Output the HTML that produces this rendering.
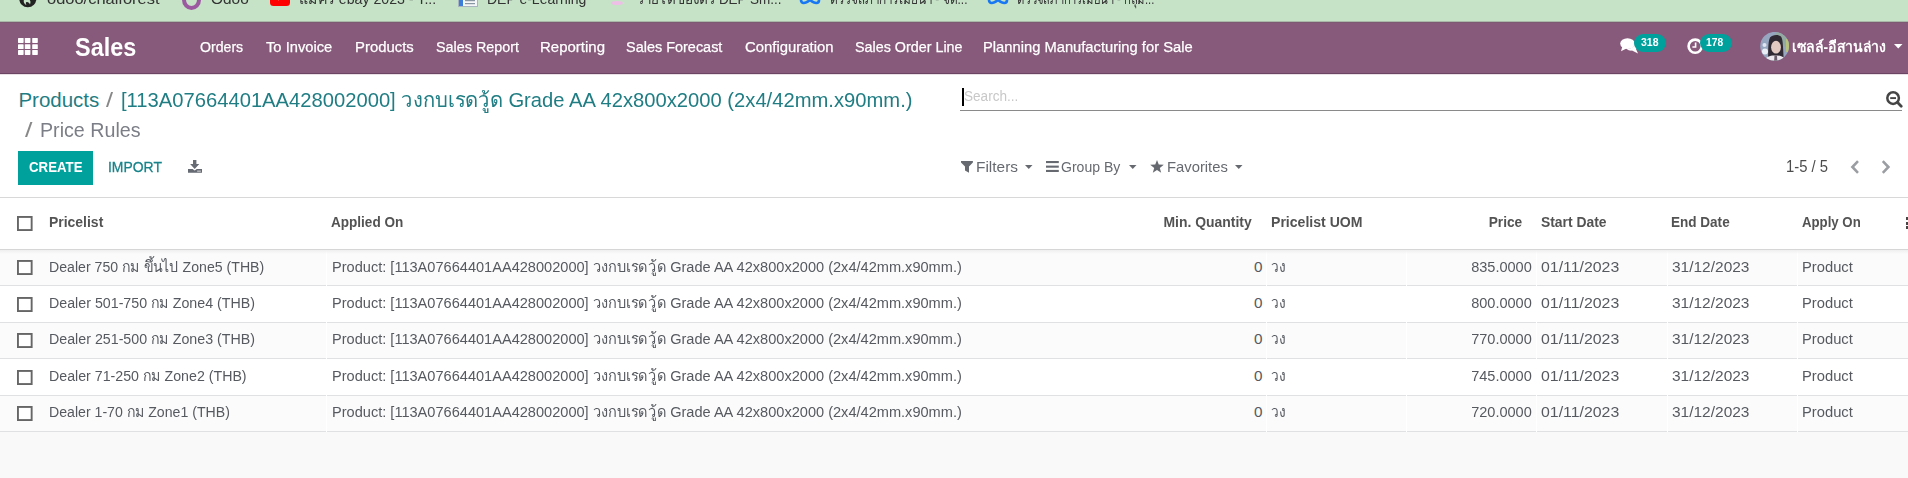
<!DOCTYPE html>
<html><head><meta charset="utf-8"><title>Price Rules</title>
<style>
html,body{margin:0;padding:0;width:1908px;height:478px;overflow:hidden;background:#fff;font-family:"Liberation Sans", sans-serif;}
.t{position:absolute;white-space:pre;line-height:20px;}
</style></head><body>
<div style="position:absolute;left:0px;top:0px;width:1908px;height:21px;background:#c6e2c7;"></div>
<div style="position:absolute;left:0px;top:21px;width:1908px;height:1px;background:#a9b8a8;"></div>
<svg style="position:absolute;left:19px;top:-10px" width="18" height="18" viewBox="0 0 18 18"><circle cx="8.8" cy="8.6" r="8.6" fill="#222"/><path d="M5.5 0.5C6 4 6.5 7.5 9 9C11.5 10 12 11.5 11 14.5C10.5 12.5 8.5 11.6 7.2 12.2C6.4 13 7 14.3 7.6 15C5.5 14.6 4.4 12.6 4.8 10.5C5.2 8.4 4.6 4.5 5.5 0.5Z" fill="#c6e2c7"/></svg>
<div class="t" id="t1" style="left:47.00px;top:-11.20px;font-size:15px;font-weight:normal;color:#333;transform:scaleX(1.0971);transform-origin:left center;">odoo/chaiforest</div>
<div style="position:absolute;left:182px;top:-10px;width:11px;height:12px;border:4px solid #9b59a0;border-radius:50%"></div>
<div class="t" id="t2" style="left:211.00px;top:-11.20px;font-size:15px;font-weight:normal;color:#333;transform:scaleX(1.0286);transform-origin:left center;">Odoo</div>
<svg style="position:absolute;left:270px;top:-8px" width="20" height="14"><rect width="20" height="14" rx="3.5" fill="#f00"/><path d="M8 2V8.5L13.5 5.2Z" fill="#fff"/></svg>
<div class="t" id="t3" style="left:299.40px;top:-11.20px;font-size:15px;font-weight:normal;color:#333;transform:scaleX(0.9444);transform-origin:left center;">แม็คร ebay 2023 - T...</div>
<svg style="position:absolute;left:458px;top:-8px" width="21" height="16"><rect x="0.5" y="0.5" width="19" height="14" fill="#f4f6f8" stroke="#a8b4c0"/><rect x="1" y="1" width="4" height="13" fill="#3b7dd8"/><rect x="7" y="8" width="10" height="1.2" fill="#8896a4"/><rect x="7" y="11" width="10" height="1.2" fill="#8896a4"/></svg>
<div class="t" id="t4" style="left:487.30px;top:-11.20px;font-size:15px;font-weight:normal;color:#333;transform:scaleX(0.9333);transform-origin:left center;">DEP e-Learning</div>
<svg style="position:absolute;left:609px;top:-8px" width="16" height="15"><path d="M6 0H10L9 8H7Z" fill="#d42fc8"/><ellipse cx="8" cy="11" rx="6" ry="2" fill="#eebfe6"/></svg>
<div class="t" id="t5" style="left:637.20px;top:-11.20px;font-size:15px;font-weight:normal;color:#333;transform:scaleX(0.8981);transform-origin:left center;">รายได้ของตร DEP Sm...</div>
<svg style="position:absolute;left:799px;top:-6px" width="22" height="12" viewBox="0 0 22 12"><path d="M2 6c0-4 4-4 9 0s9 4 9 0-4-4-9 0-9 4-9 0" fill="none" stroke="#1877f2" stroke-width="2.6"/></svg>
<div class="t" id="t6" style="left:829.90px;top:-11.20px;font-size:15px;font-weight:normal;color:#333;transform:scaleX(0.7907);transform-origin:left center;">ตรวจสภาการเมียนำ - จัด...</div>
<svg style="position:absolute;left:987px;top:-6px" width="22" height="12" viewBox="0 0 22 12"><path d="M2 6c0-4 4-4 9 0s9 4 9 0-4-4-9 0-9 4-9 0" fill="none" stroke="#1877f2" stroke-width="2.6"/></svg>
<div class="t" id="t7" style="left:1017.30px;top:-11.20px;font-size:15px;font-weight:normal;color:#333;transform:scaleX(0.7514);transform-origin:left center;">ตรวจสภาการเมียนำ - กลุ่ม...</div>
<div style="position:absolute;left:0px;top:22px;width:1908px;height:51px;background:#875a7b;"></div>
<div style="position:absolute;left:0px;top:22px;width:1908px;height:1px;background:#7c5a72;"></div>
<div style="position:absolute;left:0px;top:73px;width:1908px;height:1px;background:#6a4462;"></div>
<div style="position:absolute;left:0px;top:74px;width:1908px;height:1px;background:#e9e0e6;"></div>
<svg style="position:absolute;left:18px;top:37.6px" width="21" height="17"><rect x="0.0" y="0.0" width="5.6" height="4.9" rx="0.6" fill="#fff"/><rect x="0.0" y="6.2" width="5.6" height="4.9" rx="0.6" fill="#fff"/><rect x="0.0" y="12.0" width="5.6" height="4.9" rx="0.6" fill="#fff"/><rect x="6.8" y="0.0" width="5.6" height="4.9" rx="0.6" fill="#fff"/><rect x="6.8" y="6.2" width="5.6" height="4.9" rx="0.6" fill="#fff"/><rect x="6.8" y="12.0" width="5.6" height="4.9" rx="0.6" fill="#fff"/><rect x="14.2" y="0.0" width="5.6" height="4.9" rx="0.6" fill="#fff"/><rect x="14.2" y="6.2" width="5.6" height="4.9" rx="0.6" fill="#fff"/><rect x="14.2" y="12.0" width="5.6" height="4.9" rx="0.6" fill="#fff"/></svg>
<div class="t" id="t8" style="left:74.70px;top:37.24px;font-size:25px;font-weight:bold;color:#fff;transform:scaleX(0.9375);transform-origin:left center;">Sales</div>
<div class="t" id="t9" style="left:199.70px;top:36.93px;font-size:15.2px;font-weight:normal;color:#fff;transform:scaleX(0.9304);transform-origin:left center;-webkit-text-stroke:0.25px #fff;">Orders</div>
<div class="t" id="t10" style="left:265.70px;top:36.93px;font-size:15.2px;font-weight:normal;color:#fff;transform:scaleX(0.9691);transform-origin:left center;-webkit-text-stroke:0.25px #fff;">To Invoice</div>
<div class="t" id="t11" style="left:354.80px;top:36.93px;font-size:15.2px;font-weight:normal;color:#fff;transform:scaleX(0.9797);transform-origin:left center;-webkit-text-stroke:0.25px #fff;">Products</div>
<div class="t" id="t12" style="left:435.70px;top:36.93px;font-size:15.2px;font-weight:normal;color:#fff;transform:scaleX(0.9448);transform-origin:left center;-webkit-text-stroke:0.25px #fff;">Sales Report</div>
<div class="t" id="t13" style="left:540.40px;top:36.93px;font-size:15.2px;font-weight:normal;color:#fff;transform:scaleX(0.9875);transform-origin:left center;-webkit-text-stroke:0.25px #fff;">Reporting</div>
<div class="t" id="t14" style="left:626.20px;top:36.93px;font-size:15.2px;font-weight:normal;color:#fff;transform:scaleX(0.9515);transform-origin:left center;-webkit-text-stroke:0.25px #fff;">Sales Forecast</div>
<div class="t" id="t15" style="left:744.60px;top:36.93px;font-size:15.2px;font-weight:normal;color:#fff;transform:scaleX(0.9809);transform-origin:left center;-webkit-text-stroke:0.25px #fff;">Configuration</div>
<div class="t" id="t16" style="left:854.70px;top:36.93px;font-size:15.2px;font-weight:normal;color:#fff;transform:scaleX(0.9438);transform-origin:left center;-webkit-text-stroke:0.25px #fff;">Sales Order Line</div>
<div class="t" id="t17" style="left:983.00px;top:36.93px;font-size:15.2px;font-weight:normal;color:#fff;transform:scaleX(0.9698);transform-origin:left center;-webkit-text-stroke:0.25px #fff;">Planning Manufacturing for Sale</div>
<svg style="position:absolute;left:1620px;top:38px" width="19" height="16" viewBox="0 0 19 16"><ellipse cx="7.5" cy="5.6" rx="7.3" ry="5.4" fill="#fff"/><path d="M2.2 9 L1 13.2 L6.5 10.5Z" fill="#fff"/><path d="M15.2 3.5 C18.5 5 18.8 9 16 11 L18 15.5 L12 12.6 C10 12.8 8 12.2 6.8 11.2 C11.5 11 15.5 8 15.2 3.5Z" fill="#fff"/></svg>
<div style="position:absolute;left:1634px;top:34.3px;width:32px;height:18px;border-radius:9px;background:#00a09d"></div>
<div class="t" id="t18" style="left:1640.80px;top:31.86px;font-size:10.8px;font-weight:bold;color:#fff;transform:scaleX(0.9722);transform-origin:left center;">318</div>
<svg style="position:absolute;left:1687px;top:37.5px" width="17" height="17" viewBox="0 0 17 17"><circle cx="8.2" cy="8.2" r="6.6" fill="none" stroke="#fff" stroke-width="2.6"/><path d="M8.6 4.4V9H5.4" fill="none" stroke="#fff" stroke-width="1.6"/></svg>
<div style="position:absolute;left:1700px;top:34.3px;width:31.5px;height:18px;border-radius:9px;background:#00a09d"></div>
<div class="t" id="t19" style="left:1706.40px;top:31.86px;font-size:10.8px;font-weight:bold;color:#fff;transform:scaleX(0.9500);transform-origin:left center;">178</div>
<svg style="position:absolute;left:1760px;top:32px;filter:blur(0.6px)" width="29" height="29" viewBox="0 0 29 29"><defs><clipPath id="av"><circle cx="14.6" cy="14.3" r="14.4"/></clipPath></defs><g clip-path="url(#av)"><rect x="-3" y="-3" width="35" height="35" fill="#97a6c0"/><ellipse cx="22" cy="7" rx="9" ry="8" fill="#93aaa2"/><rect x="26" y="7" width="5" height="13" fill="#b9c27c"/><circle cx="4.5" cy="13" r="2" fill="#dfe6f1"/><circle cx="5" cy="19.5" r="3" fill="#e9eef6"/><path d="M8 31 C8.5 22 7.5 11 10 5.5 C12 2.5 18.5 2 21 4.5 C23.5 7.5 23 20 24 31Z" fill="#2e2933"/><ellipse cx="16" cy="15.2" rx="4.9" ry="6.4" fill="#e2cac2"/><path d="M11 8.5 C13 5 18.5 4.5 21 8 C18.5 7 14 7.2 11 8.5Z" fill="#2e2933"/><path d="M3 31 C5 25 10 23 15.5 23.5 C21 23 25 25 27 31Z" fill="#ece6ee"/><path d="M14.5 23.5 L17 23.5 L17.4 31 L14 31Z" fill="#6a5c6a"/></g></svg>
<div class="t" id="t20" style="left:1792.30px;top:36.91px;font-size:14.7px;font-weight:bold;color:#fff;transform:scaleX(0.9557);transform-origin:left center;">เซลล์-อีสานล่าง</div>
<svg style="position:absolute;left:1894px;top:44px" width="9" height="5"><path d="M0 0H8.5L4.25 4.5Z" fill="#fff"/></svg>
<div class="t" id="t21" style="left:18.40px;top:89.70px;font-size:20.5px;font-weight:normal;color:#1f7d83;">Products</div>
<div class="t" id="t22" style="left:105.80px;top:89.70px;font-size:20.5px;font-weight:normal;color:#888;transform:scaleX(1.2333);transform-origin:left center;">/</div>
<div class="t" id="t23" style="left:121.00px;top:89.70px;font-size:20.5px;font-weight:normal;color:#1f7d83;transform:scaleX(0.9850);transform-origin:left center;">[113A07664401AA428002000] วงกบเรดวู้ด Grade AA 42x800x2000 (2x4/42mm.x90mm.)</div>
<div class="t" id="t24" style="left:24.60px;top:119.50px;font-size:20.5px;font-weight:normal;color:#888;transform:scaleX(1.3000);transform-origin:left center;">/</div>
<div class="t" id="t25" style="left:39.80px;top:119.50px;font-size:20.5px;font-weight:normal;color:#7b7e86;transform:scaleX(0.9592);transform-origin:left center;">Price Rules</div>
<div style="position:absolute;left:960px;top:110px;width:942px;height:1px;background:#8a8a8a;"></div>
<div style="position:absolute;left:962px;top:88px;width:2px;height:18px;background:#000;"></div>
<div class="t" id="t26" style="left:963.50px;top:85.75px;font-size:14px;font-weight:normal;color:#c8c8c8;transform:scaleX(0.9691);transform-origin:left center;">Search...</div>
<svg style="position:absolute;left:1885.5px;top:90.8px" width="17" height="17" viewBox="0 0 17 17"><circle cx="7.1" cy="7.1" r="5.8" fill="none" stroke="#454545" stroke-width="2.5"/><path d="M4.2 7.1H10" stroke="#454545" stroke-width="1.9"/><path d="M11.6 11.6L15.2 15.2" stroke="#454545" stroke-width="2.8" stroke-linecap="round"/></svg>
<div style="position:absolute;left:18px;top:151px;width:75px;height:34px;background:#00a09d;"></div>
<div class="t" id="t27" style="left:28.60px;top:156.70px;font-size:15.3px;font-weight:bold;color:#fff;transform:scaleX(0.8672);transform-origin:left center;">CREATE</div>
<div class="t" id="t28" style="left:107.70px;top:156.63px;font-size:15.5px;font-weight:normal;color:#17838a;transform:scaleX(0.8983);transform-origin:left center;-webkit-text-stroke:0.3px #17838a;">IMPORT</div>
<svg style="position:absolute;left:187.8px;top:160px" width="14" height="13" viewBox="0 0 14 13"><path d="M5 0H8.4V4.1H11.3L6.7 8.9L2.1 4.1H5Z" fill="#666a72"/><path d="M0 8.9H4.6L6.7 10.6L8.8 8.9H14V12.8H0Z" fill="#666a72"/><rect x="9.4" y="10.6" width="1.3" height="1.1" fill="#fff"/><rect x="11.3" y="10.6" width="1.3" height="1.1" fill="#fff"/></svg>
<svg style="position:absolute;left:960.9px;top:161px" width="12" height="12" viewBox="0 0 12 12"><path d="M0 0H11.9V1.4L8 5.4V11.8L4 9.4V5.4L0 1.4Z" fill="#666a70"/></svg>
<div class="t" id="t29" style="left:975.70px;top:156.60px;font-size:15px;font-weight:normal;color:#666a70;transform:scaleX(1.0282);transform-origin:left center;">Filters</div>
<svg style="position:absolute;left:1024.5px;top:165px" width="8" height="4"><path d="M0 0H7.5L3.75 4Z" fill="#666a70"/></svg>
<svg style="position:absolute;left:1046px;top:161px" width="13" height="12"><rect y="0" width="12.8" height="2.1" fill="#666a70"/><rect y="4.6" width="12.8" height="2.1" fill="#666a70"/><rect y="8.9" width="12.8" height="2.1" fill="#666a70"/></svg>
<div class="t" id="t30" style="left:1061.40px;top:156.60px;font-size:15px;font-weight:normal;color:#666a70;transform:scaleX(0.9365);transform-origin:left center;">Group By</div>
<svg style="position:absolute;left:1129.2px;top:165px" width="8" height="4"><path d="M0 0H7.5L3.75 4Z" fill="#666a70"/></svg>
<svg style="position:absolute;left:1150px;top:159.7px" width="14" height="13" viewBox="0 0 14 13"><path d="M7 0L8.75 4.6L13.8 4.8L9.8 8L11.2 12.8L7 10.1L2.8 12.8L4.2 8L0.2 4.8L5.25 4.6Z" fill="#666a70"/></svg>
<div class="t" id="t31" style="left:1166.80px;top:156.60px;font-size:15px;font-weight:normal;color:#666a70;transform:scaleX(0.9867);transform-origin:left center;">Favorites</div>
<svg style="position:absolute;left:1235px;top:165px" width="8" height="4"><path d="M0 0H7.5L3.75 4Z" fill="#666a70"/></svg>
<div class="t" id="t32" style="left:1786.30px;top:157.19px;font-size:15.6px;font-weight:normal;color:#4c4c4c;transform:scaleX(0.9512);transform-origin:left center;">1-5 / 5</div>
<svg style="position:absolute;left:1849.5px;top:159.8px" width="10" height="14" viewBox="0 0 10 14"><path d="M8 1.2L2.4 7L8 12.8" fill="none" stroke="#9a9ea3" stroke-width="2.6"/></svg>
<svg style="position:absolute;left:1880.5px;top:159.8px" width="10" height="14" viewBox="0 0 10 14"><path d="M1.8 1.2L7.4 7L1.8 12.8" fill="none" stroke="#9a9ea3" stroke-width="2.6"/></svg>
<div style="position:absolute;left:0px;top:197px;width:1908px;height:1px;background:#d8d8d8;"></div>
<div style="position:absolute;left:0px;top:432px;width:1908px;height:46px;background:#f9f9f9;"></div>
<div style="position:absolute;left:0px;top:249px;width:1908px;height:1px;background:#d6d6d6;"></div>
<div style="position:absolute;left:0px;top:250px;width:1908px;height:35px;background:#fbfbfb;"></div>
<div style="position:absolute;left:0px;top:285px;width:1908px;height:1px;background:#e0e1e3;"></div>
<div style="position:absolute;left:326px;top:250px;width:1px;height:36px;background:#ffffff;"></div>
<div style="position:absolute;left:1266px;top:250px;width:1px;height:36px;background:#ffffff;"></div>
<div style="position:absolute;left:1406px;top:250px;width:1px;height:36px;background:#ffffff;"></div>
<div style="position:absolute;left:1536px;top:250px;width:1px;height:36px;background:#ffffff;"></div>
<div style="position:absolute;left:1667px;top:250px;width:1px;height:36px;background:#ffffff;"></div>
<div style="position:absolute;left:1797px;top:250px;width:1px;height:36px;background:#ffffff;"></div>
<div style="position:absolute;left:0px;top:286px;width:1908px;height:36px;background:#ffffff;"></div>
<div style="position:absolute;left:0px;top:322px;width:1908px;height:1px;background:#e0e1e3;"></div>
<div style="position:absolute;left:326px;top:286px;width:1px;height:37px;background:#ffffff;"></div>
<div style="position:absolute;left:1266px;top:286px;width:1px;height:37px;background:#ffffff;"></div>
<div style="position:absolute;left:1406px;top:286px;width:1px;height:37px;background:#ffffff;"></div>
<div style="position:absolute;left:1536px;top:286px;width:1px;height:37px;background:#ffffff;"></div>
<div style="position:absolute;left:1667px;top:286px;width:1px;height:37px;background:#ffffff;"></div>
<div style="position:absolute;left:1797px;top:286px;width:1px;height:37px;background:#ffffff;"></div>
<div style="position:absolute;left:0px;top:323px;width:1908px;height:35px;background:#fbfbfb;"></div>
<div style="position:absolute;left:0px;top:358px;width:1908px;height:1px;background:#e0e1e3;"></div>
<div style="position:absolute;left:326px;top:323px;width:1px;height:36px;background:#ffffff;"></div>
<div style="position:absolute;left:1266px;top:323px;width:1px;height:36px;background:#ffffff;"></div>
<div style="position:absolute;left:1406px;top:323px;width:1px;height:36px;background:#ffffff;"></div>
<div style="position:absolute;left:1536px;top:323px;width:1px;height:36px;background:#ffffff;"></div>
<div style="position:absolute;left:1667px;top:323px;width:1px;height:36px;background:#ffffff;"></div>
<div style="position:absolute;left:1797px;top:323px;width:1px;height:36px;background:#ffffff;"></div>
<div style="position:absolute;left:0px;top:359px;width:1908px;height:36px;background:#ffffff;"></div>
<div style="position:absolute;left:0px;top:395px;width:1908px;height:1px;background:#e0e1e3;"></div>
<div style="position:absolute;left:326px;top:359px;width:1px;height:37px;background:#ffffff;"></div>
<div style="position:absolute;left:1266px;top:359px;width:1px;height:37px;background:#ffffff;"></div>
<div style="position:absolute;left:1406px;top:359px;width:1px;height:37px;background:#ffffff;"></div>
<div style="position:absolute;left:1536px;top:359px;width:1px;height:37px;background:#ffffff;"></div>
<div style="position:absolute;left:1667px;top:359px;width:1px;height:37px;background:#ffffff;"></div>
<div style="position:absolute;left:1797px;top:359px;width:1px;height:37px;background:#ffffff;"></div>
<div style="position:absolute;left:0px;top:396px;width:1908px;height:35px;background:#fbfbfb;"></div>
<div style="position:absolute;left:0px;top:431px;width:1908px;height:1px;background:#e0e1e3;"></div>
<div style="position:absolute;left:326px;top:396px;width:1px;height:36px;background:#ffffff;"></div>
<div style="position:absolute;left:1266px;top:396px;width:1px;height:36px;background:#ffffff;"></div>
<div style="position:absolute;left:1406px;top:396px;width:1px;height:36px;background:#ffffff;"></div>
<div style="position:absolute;left:1536px;top:396px;width:1px;height:36px;background:#ffffff;"></div>
<div style="position:absolute;left:1667px;top:396px;width:1px;height:36px;background:#ffffff;"></div>
<div style="position:absolute;left:1797px;top:396px;width:1px;height:36px;background:#ffffff;"></div>
<div style="position:absolute;left:0px;top:250px;width:1908px;height:4px;background:linear-gradient(#efefef,rgba(251,251,251,0));"></div>
<svg style="position:absolute;left:17.2px;top:215.9px" width="16" height="16"><rect x="0.95" y="0.95" width="13.7" height="13.1" fill="#fff" stroke="#666" stroke-width="1.9"/></svg>
<div class="t" id="t33" style="left:49.20px;top:212.15px;font-size:14px;font-weight:bold;color:#535353;transform:scaleX(0.9963);transform-origin:left center;">Pricelist</div>
<div class="t" id="t34" style="left:330.90px;top:212.15px;font-size:14px;font-weight:bold;color:#535353;transform:scaleX(0.9676);transform-origin:left center;">Applied On</div>
<div class="t" id="t35" style="right:656.00px;top:212.15px;font-size:14px;font-weight:bold;color:#535353;transform:scaleX(0.9955);transform-origin:right center;">Min. Quantity</div>
<div class="t" id="t36" style="left:1270.90px;top:212.15px;font-size:14px;font-weight:bold;color:#535353;transform:scaleX(1.0056);transform-origin:left center;">Pricelist UOM</div>
<div class="t" id="t37" style="right:386.00px;top:212.15px;font-size:14px;font-weight:bold;color:#535353;transform:scaleX(0.9794);transform-origin:right center;">Price</div>
<div class="t" id="t38" style="left:1540.90px;top:212.15px;font-size:14px;font-weight:bold;color:#535353;transform:scaleX(0.9909);transform-origin:left center;">Start Date</div>
<div class="t" id="t39" style="left:1671.00px;top:212.15px;font-size:14px;font-weight:bold;color:#535353;transform:scaleX(0.9667);transform-origin:left center;">End Date</div>
<div class="t" id="t40" style="left:1801.90px;top:212.15px;font-size:14px;font-weight:bold;color:#535353;transform:scaleX(0.9435);transform-origin:left center;">Apply On</div>
<div style="position:absolute;left:1905.5px;top:216.8px;width:3px;height:12.4px;background:repeating-linear-gradient(#4a4444 0 3.3px,transparent 3.3px 4.55px)"></div>
<svg style="position:absolute;left:17.2px;top:260.0px" width="16" height="16"><rect x="0.95" y="0.95" width="13.7" height="13.1" fill="#fff" stroke="#666" stroke-width="1.9"/></svg>
<div class="t" id="t41" style="left:49.20px;top:256.50px;font-size:15.3px;font-weight:normal;color:#565a60;transform:scaleX(0.9237);transform-origin:left center;">Dealer 750 กม ขึ้นไป Zone5 (THB)</div>
<div class="t" id="t42" style="left:332.40px;top:256.50px;font-size:15.3px;font-weight:normal;color:#565a60;transform:scaleX(0.9529);transform-origin:left center;">Product: [113A07664401AA428002000] วงกบเรดวู้ด Grade AA 42x800x2000 (2x4/42mm.x90mm.)</div>
<div class="t" id="t43" style="right:645.50px;top:256.50px;font-size:15.3px;font-weight:normal;color:#565a60;">0</div>
<div class="t" id="t44" style="left:1271.00px;top:256.50px;font-size:15.3px;font-weight:normal;color:#565a60;transform:scaleX(0.8933);transform-origin:left center;">วง</div>
<div class="t" id="t45" style="right:375.90px;top:256.50px;font-size:15.3px;font-weight:normal;color:#565a60;transform:scaleX(0.9508);transform-origin:right center;">835.0000</div>
<div class="t" id="t46" style="left:1541.30px;top:256.50px;font-size:15.3px;font-weight:normal;color:#565a60;transform:scaleX(1.0378);transform-origin:left center;">01/11/2023</div>
<div class="t" id="t47" style="left:1671.60px;top:256.50px;font-size:15.3px;font-weight:normal;color:#565a60;transform:scaleX(1.0118);transform-origin:left center;">31/12/2023</div>
<div class="t" id="t48" style="left:1802.40px;top:256.50px;font-size:15.3px;font-weight:normal;color:#565a60;transform:scaleX(0.9635);transform-origin:left center;">Product</div>
<svg style="position:absolute;left:17.2px;top:296.6px" width="16" height="16"><rect x="0.95" y="0.95" width="13.7" height="13.1" fill="#fff" stroke="#666" stroke-width="1.9"/></svg>
<div class="t" id="t49" style="left:49.20px;top:292.90px;font-size:15.3px;font-weight:normal;color:#565a60;transform:scaleX(0.9305);transform-origin:left center;">Dealer 501-750 กม Zone4 (THB)</div>
<div class="t" id="t50" style="left:332.40px;top:292.90px;font-size:15.3px;font-weight:normal;color:#565a60;transform:scaleX(0.9529);transform-origin:left center;">Product: [113A07664401AA428002000] วงกบเรดวู้ด Grade AA 42x800x2000 (2x4/42mm.x90mm.)</div>
<div class="t" id="t51" style="right:645.50px;top:292.90px;font-size:15.3px;font-weight:normal;color:#565a60;">0</div>
<div class="t" id="t52" style="left:1271.00px;top:292.90px;font-size:15.3px;font-weight:normal;color:#565a60;transform:scaleX(0.8933);transform-origin:left center;">วง</div>
<div class="t" id="t53" style="right:375.90px;top:292.90px;font-size:15.3px;font-weight:normal;color:#565a60;transform:scaleX(0.9508);transform-origin:right center;">800.0000</div>
<div class="t" id="t54" style="left:1541.30px;top:292.90px;font-size:15.3px;font-weight:normal;color:#565a60;transform:scaleX(1.0378);transform-origin:left center;">01/11/2023</div>
<div class="t" id="t55" style="left:1671.60px;top:292.90px;font-size:15.3px;font-weight:normal;color:#565a60;transform:scaleX(1.0118);transform-origin:left center;">31/12/2023</div>
<div class="t" id="t56" style="left:1802.40px;top:292.90px;font-size:15.3px;font-weight:normal;color:#565a60;transform:scaleX(0.9635);transform-origin:left center;">Product</div>
<svg style="position:absolute;left:17.2px;top:333.2px" width="16" height="16"><rect x="0.95" y="0.95" width="13.7" height="13.1" fill="#fff" stroke="#666" stroke-width="1.9"/></svg>
<div class="t" id="t57" style="left:49.20px;top:329.30px;font-size:15.3px;font-weight:normal;color:#565a60;transform:scaleX(0.9305);transform-origin:left center;">Dealer 251-500 กม Zone3 (THB)</div>
<div class="t" id="t58" style="left:332.40px;top:329.30px;font-size:15.3px;font-weight:normal;color:#565a60;transform:scaleX(0.9529);transform-origin:left center;">Product: [113A07664401AA428002000] วงกบเรดวู้ด Grade AA 42x800x2000 (2x4/42mm.x90mm.)</div>
<div class="t" id="t59" style="right:645.50px;top:329.30px;font-size:15.3px;font-weight:normal;color:#565a60;">0</div>
<div class="t" id="t60" style="left:1271.00px;top:329.30px;font-size:15.3px;font-weight:normal;color:#565a60;transform:scaleX(0.8933);transform-origin:left center;">วง</div>
<div class="t" id="t61" style="right:375.90px;top:329.30px;font-size:15.3px;font-weight:normal;color:#565a60;transform:scaleX(0.9508);transform-origin:right center;">770.0000</div>
<div class="t" id="t62" style="left:1541.30px;top:329.30px;font-size:15.3px;font-weight:normal;color:#565a60;transform:scaleX(1.0378);transform-origin:left center;">01/11/2023</div>
<div class="t" id="t63" style="left:1671.60px;top:329.30px;font-size:15.3px;font-weight:normal;color:#565a60;transform:scaleX(1.0118);transform-origin:left center;">31/12/2023</div>
<div class="t" id="t64" style="left:1802.40px;top:329.30px;font-size:15.3px;font-weight:normal;color:#565a60;transform:scaleX(0.9635);transform-origin:left center;">Product</div>
<svg style="position:absolute;left:17.2px;top:369.8px" width="16" height="16"><rect x="0.95" y="0.95" width="13.7" height="13.1" fill="#fff" stroke="#666" stroke-width="1.9"/></svg>
<div class="t" id="t65" style="left:49.20px;top:365.70px;font-size:15.3px;font-weight:normal;color:#565a60;transform:scaleX(0.9283);transform-origin:left center;">Dealer 71-250 กม Zone2 (THB)</div>
<div class="t" id="t66" style="left:332.40px;top:365.70px;font-size:15.3px;font-weight:normal;color:#565a60;transform:scaleX(0.9529);transform-origin:left center;">Product: [113A07664401AA428002000] วงกบเรดวู้ด Grade AA 42x800x2000 (2x4/42mm.x90mm.)</div>
<div class="t" id="t67" style="right:645.50px;top:365.70px;font-size:15.3px;font-weight:normal;color:#565a60;">0</div>
<div class="t" id="t68" style="left:1271.00px;top:365.70px;font-size:15.3px;font-weight:normal;color:#565a60;transform:scaleX(0.8933);transform-origin:left center;">วง</div>
<div class="t" id="t69" style="right:375.90px;top:365.70px;font-size:15.3px;font-weight:normal;color:#565a60;transform:scaleX(0.9508);transform-origin:right center;">745.0000</div>
<div class="t" id="t70" style="left:1541.30px;top:365.70px;font-size:15.3px;font-weight:normal;color:#565a60;transform:scaleX(1.0378);transform-origin:left center;">01/11/2023</div>
<div class="t" id="t71" style="left:1671.60px;top:365.70px;font-size:15.3px;font-weight:normal;color:#565a60;transform:scaleX(1.0118);transform-origin:left center;">31/12/2023</div>
<div class="t" id="t72" style="left:1802.40px;top:365.70px;font-size:15.3px;font-weight:normal;color:#565a60;transform:scaleX(0.9635);transform-origin:left center;">Product</div>
<svg style="position:absolute;left:17.2px;top:406.4px" width="16" height="16"><rect x="0.95" y="0.95" width="13.7" height="13.1" fill="#fff" stroke="#666" stroke-width="1.9"/></svg>
<div class="t" id="t73" style="left:49.20px;top:402.10px;font-size:15.3px;font-weight:normal;color:#565a60;transform:scaleX(0.9236);transform-origin:left center;">Dealer 1-70 กม Zone1 (THB)</div>
<div class="t" id="t74" style="left:332.40px;top:402.10px;font-size:15.3px;font-weight:normal;color:#565a60;transform:scaleX(0.9529);transform-origin:left center;">Product: [113A07664401AA428002000] วงกบเรดวู้ด Grade AA 42x800x2000 (2x4/42mm.x90mm.)</div>
<div class="t" id="t75" style="right:645.50px;top:402.10px;font-size:15.3px;font-weight:normal;color:#565a60;">0</div>
<div class="t" id="t76" style="left:1271.00px;top:402.10px;font-size:15.3px;font-weight:normal;color:#565a60;transform:scaleX(0.8933);transform-origin:left center;">วง</div>
<div class="t" id="t77" style="right:375.90px;top:402.10px;font-size:15.3px;font-weight:normal;color:#565a60;transform:scaleX(0.9508);transform-origin:right center;">720.0000</div>
<div class="t" id="t78" style="left:1541.30px;top:402.10px;font-size:15.3px;font-weight:normal;color:#565a60;transform:scaleX(1.0378);transform-origin:left center;">01/11/2023</div>
<div class="t" id="t79" style="left:1671.60px;top:402.10px;font-size:15.3px;font-weight:normal;color:#565a60;transform:scaleX(1.0118);transform-origin:left center;">31/12/2023</div>
<div class="t" id="t80" style="left:1802.40px;top:402.10px;font-size:15.3px;font-weight:normal;color:#565a60;transform:scaleX(0.9635);transform-origin:left center;">Product</div>
</body></html>
